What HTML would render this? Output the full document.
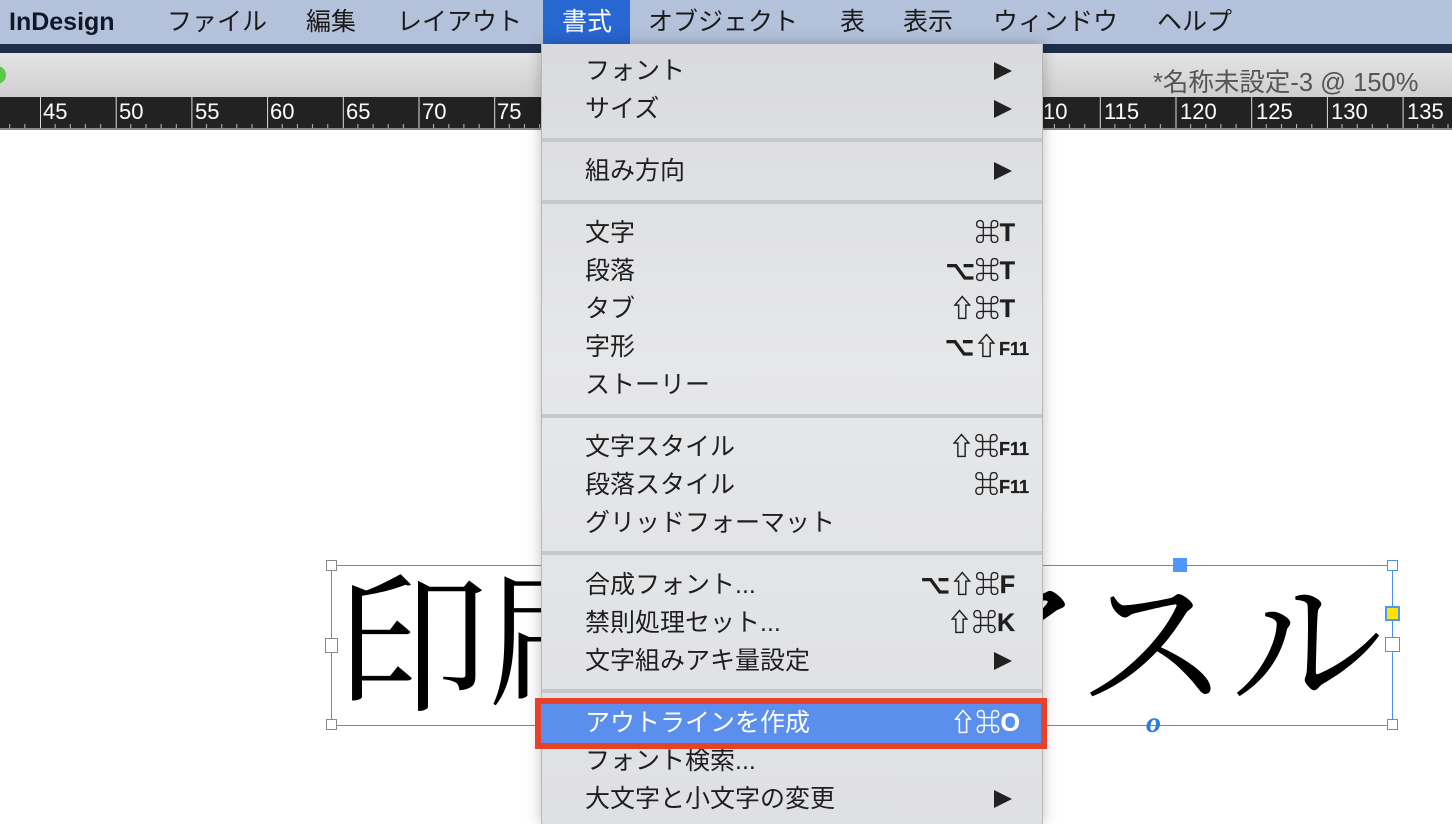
<!DOCTYPE html>
<html><head><meta charset="utf-8">
<style>
*{margin:0;padding:0;box-sizing:border-box}
body{width:1452px;height:824px;overflow:hidden;background:#fff;position:relative;font-family:"Liberation Sans","Noto Sans CJK JP",sans-serif}
#mb{position:absolute;left:0;top:0;width:1452px;height:44px;background:#b3c2da}
#mb span{position:absolute;top:6px;font-size:25px;color:#1a1a1a;line-height:32px}
#band{position:absolute;left:0;top:44px;width:1452px;height:9px;background:#1f2e4b}
#tb{position:absolute;left:0;top:53px;width:1452px;height:44px;background:linear-gradient(#e4e4e4,#cfcfcf)}
#ruler{position:absolute;left:0;top:97px;width:1452px;height:33px;background:#222}
.menu{position:absolute;left:541px;top:44px;width:502px;height:780px;background:linear-gradient(#d9dadd,#e6e7e9 40%,#dfe0e3);border-left:1px solid #b8b8b8;border-right:1px solid #b8b8b8;box-shadow:0 0 14px rgba(0,0,0,.25)}
.it{position:absolute;left:43px;font-size:25px;color:#1f1f1f;line-height:30px;white-space:nowrap}
.sc{position:absolute;right:27px;font-size:25px;color:#1f1f1f;line-height:30px;white-space:nowrap;font-weight:bold;-webkit-text-stroke:0.3px #1f1f1f}
.sc small{font-size:18px;font-weight:bold}
.ar{position:absolute;left:452px;width:0;height:0;border-left:18px solid #222;border-top:9px solid transparent;border-bottom:9px solid transparent}
.sep{position:absolute;left:0;width:500px;height:4px;background:#c5c7ca}
.h{position:absolute;width:11px;height:11px;background:#fff;border:1px solid #4a90f0}
</style></head><body>
<div id="mb">
<span style="left:9px;font-weight:bold;color:#101828;font-size:25px">InDesign</span>
<span style="left:167px">ファイル</span>
<span style="left:306px">編集</span>
<span style="left:397px">レイアウト</span>
<div style="position:absolute;left:543px;top:0;width:87px;height:44px;background:#2866d1"></div>
<span style="left:562px;color:#fff">書式</span>
<span style="left:648px">オブジェクト</span>
<span style="left:840px">表</span>
<span style="left:903px">表示</span>
<span style="left:993px">ウィンドウ</span>
<span style="left:1157px">ヘルプ</span>
</div>
<div id="band"></div>
<div id="tb">
<div style="position:absolute;left:-12px;top:13px;width:18px;height:18px;border-radius:50%;background:#5cc84a"></div>
<span style="position:absolute;left:1153px;top:9px;font-size:25.5px;color:#555">*名称未設定-3 @ 150%</span>
</div>
<div id="ruler">
<svg width="1452" height="33" style="position:absolute;left:0;top:0">
<defs><pattern id="p" x="40" y="0" width="75.7" height="33" patternUnits="userSpaceOnUse">
<line x1="0.5" y1="0" x2="0.5" y2="33" stroke="#ddd" stroke-width="1"/>
<g stroke="#bbb" stroke-width="1">
<line x1="15.1" y1="27" x2="15.1" y2="33"/><line x1="30.3" y1="27" x2="30.3" y2="33"/><line x1="45.4" y1="27" x2="45.4" y2="33"/><line x1="60.6" y1="27" x2="60.6" y2="33"/></g>
</pattern></defs>
<rect width="1452" height="31" fill="url(#p)"/>
<rect y="31" width="1452" height="2" fill="#8a8a8a"/>
<g fill="#fff" font-family="Liberation Sans" font-size="22">
<text x="43" y="22">45</text><text x="119" y="22">50</text><text x="195" y="22">55</text><text x="270" y="22">60</text><text x="346" y="22">65</text><text x="422" y="22">70</text><text x="497" y="22">75</text>
<text x="1043" y="22">10</text><text x="1104" y="22">115</text><text x="1180" y="22">120</text><text x="1256" y="22">125</text><text x="1331" y="22">130</text><text x="1407" y="22">135</text>
</g></svg>
</div>
<!-- frame -->
<div style="position:absolute;left:331px;top:565px;width:1062px;height:161px;border:1px solid #4a90f0"></div>
<div style="position:absolute;left:336px;top:543px;font-family:'Noto Serif CJK JP','Noto Serif CJK SC',serif;font-size:153px;line-height:180px;color:#000">印刷</div>
<div style="position:absolute;left:930px;top:543px;font-family:'Noto Serif CJK JP','Noto Serif CJK SC',serif;font-size:153px;line-height:180px;color:#000">アスル</div>
<div class="h" style="left:326px;top:560px;border-color:#888"></div>
<div class="h" style="left:325px;top:638px;width:13px;height:15px;border-color:#888"></div>
<div class="h" style="left:326px;top:719px;border-color:#888"></div>
<div class="h" style="left:1387px;top:560px"></div>
<div class="h" style="left:1385px;top:637px;width:15px;height:15px"></div>
<div class="h" style="left:1387px;top:719px"></div>
<div style="position:absolute;left:1173px;top:558px;width:14px;height:14px;background:#4b97fb"></div>
<div style="position:absolute;left:1385px;top:606px;width:15px;height:15px;background:#ffe600;border:2px solid #4b97fb"></div>
<div style="position:absolute;left:1146px;top:706px;font-family:'Liberation Serif',serif;font-style:italic;font-weight:bold;font-size:30px;color:#2a7be8">o</div>
<!-- menu -->
<div class="menu">
<div class="it" style="top:12px">フォント</div><div class="ar" style="top:18px"></div>
<div class="it" style="top:50px">サイズ</div><div class="ar" style="top:56px"></div>
<div class="sep" style="top:94px"></div>
<div class="it" style="top:112px">組み方向</div><div class="ar" style="top:118px"></div>
<div class="sep" style="top:156px"></div>
<div class="it" style="top:174px">文字</div><div class="sc" style="top:174px">⌘T</div>
<div class="it" style="top:212px">段落</div><div class="sc" style="top:212px">⌥⌘T</div>
<div class="it" style="top:250px">タブ</div><div class="sc" style="top:250px">⇧⌘T</div>
<div class="it" style="top:288px">字形</div><div class="sc" style="top:288px;right:13px">⌥⇧<small>F11</small></div>
<div class="it" style="top:326px">ストーリー</div>
<div class="sep" style="top:370px"></div>
<div class="it" style="top:388px">文字スタイル</div><div class="sc" style="top:388px;right:13px">⇧⌘<small>F11</small></div>
<div class="it" style="top:426px">段落スタイル</div><div class="sc" style="top:426px;right:13px">⌘<small>F11</small></div>
<div class="it" style="top:464px">グリッドフォーマット</div>
<div class="sep" style="top:507px"></div>
<div class="it" style="top:526px">合成フォント...</div><div class="sc" style="top:526px">⌥⇧⌘F</div>
<div class="it" style="top:564px">禁則処理セット...</div><div class="sc" style="top:564px">⇧⌘K</div>
<div class="it" style="top:602px">文字組みアキ量設定</div><div class="ar" style="top:608px"></div>
<div class="sep" style="top:645px"></div>
<div class="it" style="top:702px">フォント検索...</div>
<div class="it" style="top:740px">大文字と小文字の変更</div><div class="ar" style="top:746px"></div>
</div>
<div style="position:absolute;left:535px;top:698px;width:512px;height:51px;border:6px solid #e8412b;background:#5a8fee"></div>
<div class="it" style="left:585px;top:708px;color:#fff">アウトラインを作成</div>
<div class="sc" style="right:432px;top:708px;color:#fff;-webkit-text-stroke:0.3px #fff">⇧⌘O</div>
</body></html>
